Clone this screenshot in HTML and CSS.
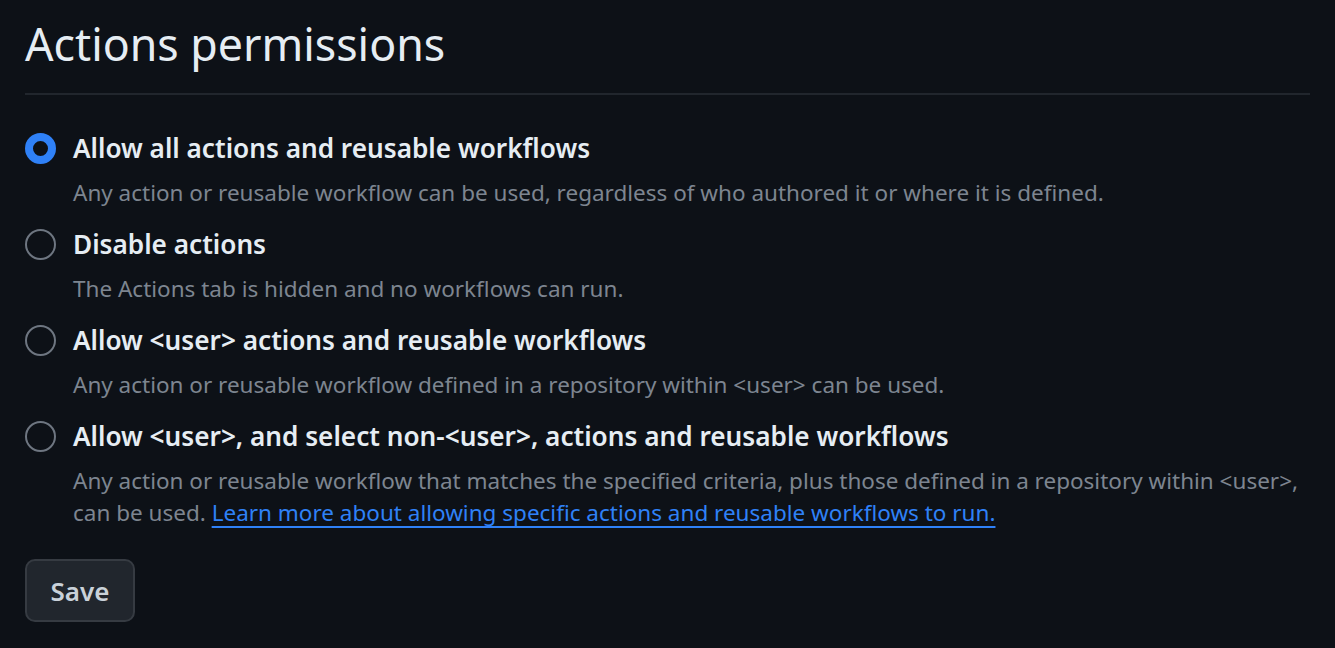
FILE: index.html
```html
<!DOCTYPE html>
<html lang="en">
<head>
<meta charset="utf-8">
<title>Actions permissions</title>
<link rel="stylesheet" href="styles.css">
</head>
<body>
<main class="page">
  <h1 class="subhead">Actions permissions</h1>
  <form class="options">
    <label class="option">
      <input class="radio" type="radio" name="perm" checked>
      <span class="option-body">
        <span class="option-title">Allow all actions and reusable workflows</span>
        <span class="option-note">Any action or reusable workflow can be used, regardless of who authored it or where it is defined.</span>
      </span>
    </label>
    <label class="option">
      <input class="radio" type="radio" name="perm">
      <span class="option-body">
        <span class="option-title">Disable actions</span>
        <span class="option-note">The Actions tab is hidden and no workflows can run.</span>
      </span>
    </label>
    <label class="option">
      <input class="radio" type="radio" name="perm">
      <span class="option-body">
        <span class="option-title">Allow &lt;user&gt; actions and reusable workflows</span>
        <span class="option-note">Any action or reusable workflow defined in a repository within &lt;user&gt; can be used.</span>
      </span>
    </label>
    <label class="option">
      <input class="radio" type="radio" name="perm">
      <span class="option-body">
        <span class="option-title">Allow &lt;user&gt;, and select non-&lt;user&gt;, actions and reusable workflows</span>
        <span class="option-note">Any action or reusable workflow that matches the specified criteria, plus those defined in a repository within &lt;user&gt;, can be used. <a class="link" href="#">Learn more about allowing specific actions and reusable workflows to run.</a></span>
      </span>
    </label>
    <div class="actions">
      <button class="btn" type="button">Save</button>
    </div>
  </form>
</main>
</body>
</html>
```

FILE: styles.css
```css
* { box-sizing: border-box; }

html, body {
  margin: 0;
  padding: 0;
  background: #0d1117;
}

body {
  font-family: "Noto Sans", "Open Sans", sans-serif;
  color: #e6edf3;
}

.page {
  padding: 14px 25px 0 25px;
}

.subhead {
  margin: 0;
  font-size: 44.7px;
  font-weight: 400;
  line-height: 60px;
  padding-bottom: 19px;
  border-bottom: 2px solid #21262d;
  color: #e6edf3;
}

.options {
  display: flex;
  flex-direction: column;
  gap: 17px;
  padding-top: 35px;
}

.option {
  display: flex;
  gap: 17px;
  align-items: flex-start;
  cursor: pointer;
}

.radio {
  appearance: none;
  -webkit-appearance: none;
  margin: 3px 0 0 0;
  width: 31px;
  height: 31px;
  flex: none;
  border-radius: 50%;
  border: 2px solid #6e7681;
  background: transparent;
}

.radio:checked {
  border: 8.5px solid #2f81f7;
  background: #0d1117;
}

.option-body {
  display: flex;
  flex-direction: column;
  gap: 11px;
  max-width: 1237px;
}

.option-title {
  font-size: 26.2px;
  font-weight: 600;
  line-height: 36px;
  color: #e6edf3;
}

.option-note {
  font-size: 22.5px;
  line-height: 32px;
  color: #7d8590;
}

.link {
  color: #2f81f7;
  text-decoration: underline;
  text-decoration-thickness: 2px;
  text-underline-offset: 5px;
}

.actions {
  padding-top: 13px;
}

.btn {
  height: 63px;
  width: 110px;
  border-radius: 10px;
  border: 2px solid #363b42;
  background: #21262d;
  color: #c9d1d9;
  font-family: "Noto Sans", "Open Sans", sans-serif;
  font-size: 26px;
  font-weight: 600;
  padding: 0;
}
```
